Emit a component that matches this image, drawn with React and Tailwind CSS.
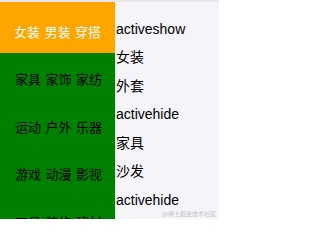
import React from "react";

const cats = [
  ["家具", "家饰", "家纺"],
  ["运动", "户外", "乐器"],
  ["游戏", "动漫", "影视"],
  ["工具", "装修", "建材"],
];

const items = ["activeshow", "女装", "外套", "activehide", "家具", "沙发", "activehide"];

const font = { fontFamily: '"Liberation Sans", "Noto Sans CJK SC", sans-serif' };

export default function App() {
  return (
    <div className="relative w-[219px] h-[219px] overflow-hidden bg-[#f5f5f9]" style={font}>
      <div className="h-[2px] bg-[#e6e6e8]" />
      <div className="flex h-[217px]">
        {/* left categories */}
        <div className="w-[115px] shrink-0 flex flex-col bg-[#008000]">
          <div className="h-[51px] shrink-0 bg-[#ffa500] pl-[14px] pt-[24px] text-white text-[13px] leading-[14px] flex gap-[4.5px]">
            <span>女装</span>
            <span>男装</span>
            <span>穿搭</span>
          </div>
          {cats.map((c, i) => (
            <div
              key={i}
              className="h-[47.5px] shrink-0 pl-[15px] pt-[20px] text-black text-[13px] leading-[14px] flex gap-[4.5px]"
            >
              {c.map((w) => (
                <span key={w}>{w}</span>
              ))}
            </div>
          ))}
        </div>

        {/* right list */}
        <div className="flex-1 pt-[13px] pl-px">
          {items.map((t, i) => (
            <div key={i} className="h-[28.5px] flex items-center text-[14px] text-black">
              {t}
            </div>
          ))}
        </div>
      </div>
      <span className="absolute right-[3px] bottom-[2px] text-[6px] leading-none text-[#c4c4c8]">
        @稀土掘金技术社区
      </span>
    </div>
  );
}
